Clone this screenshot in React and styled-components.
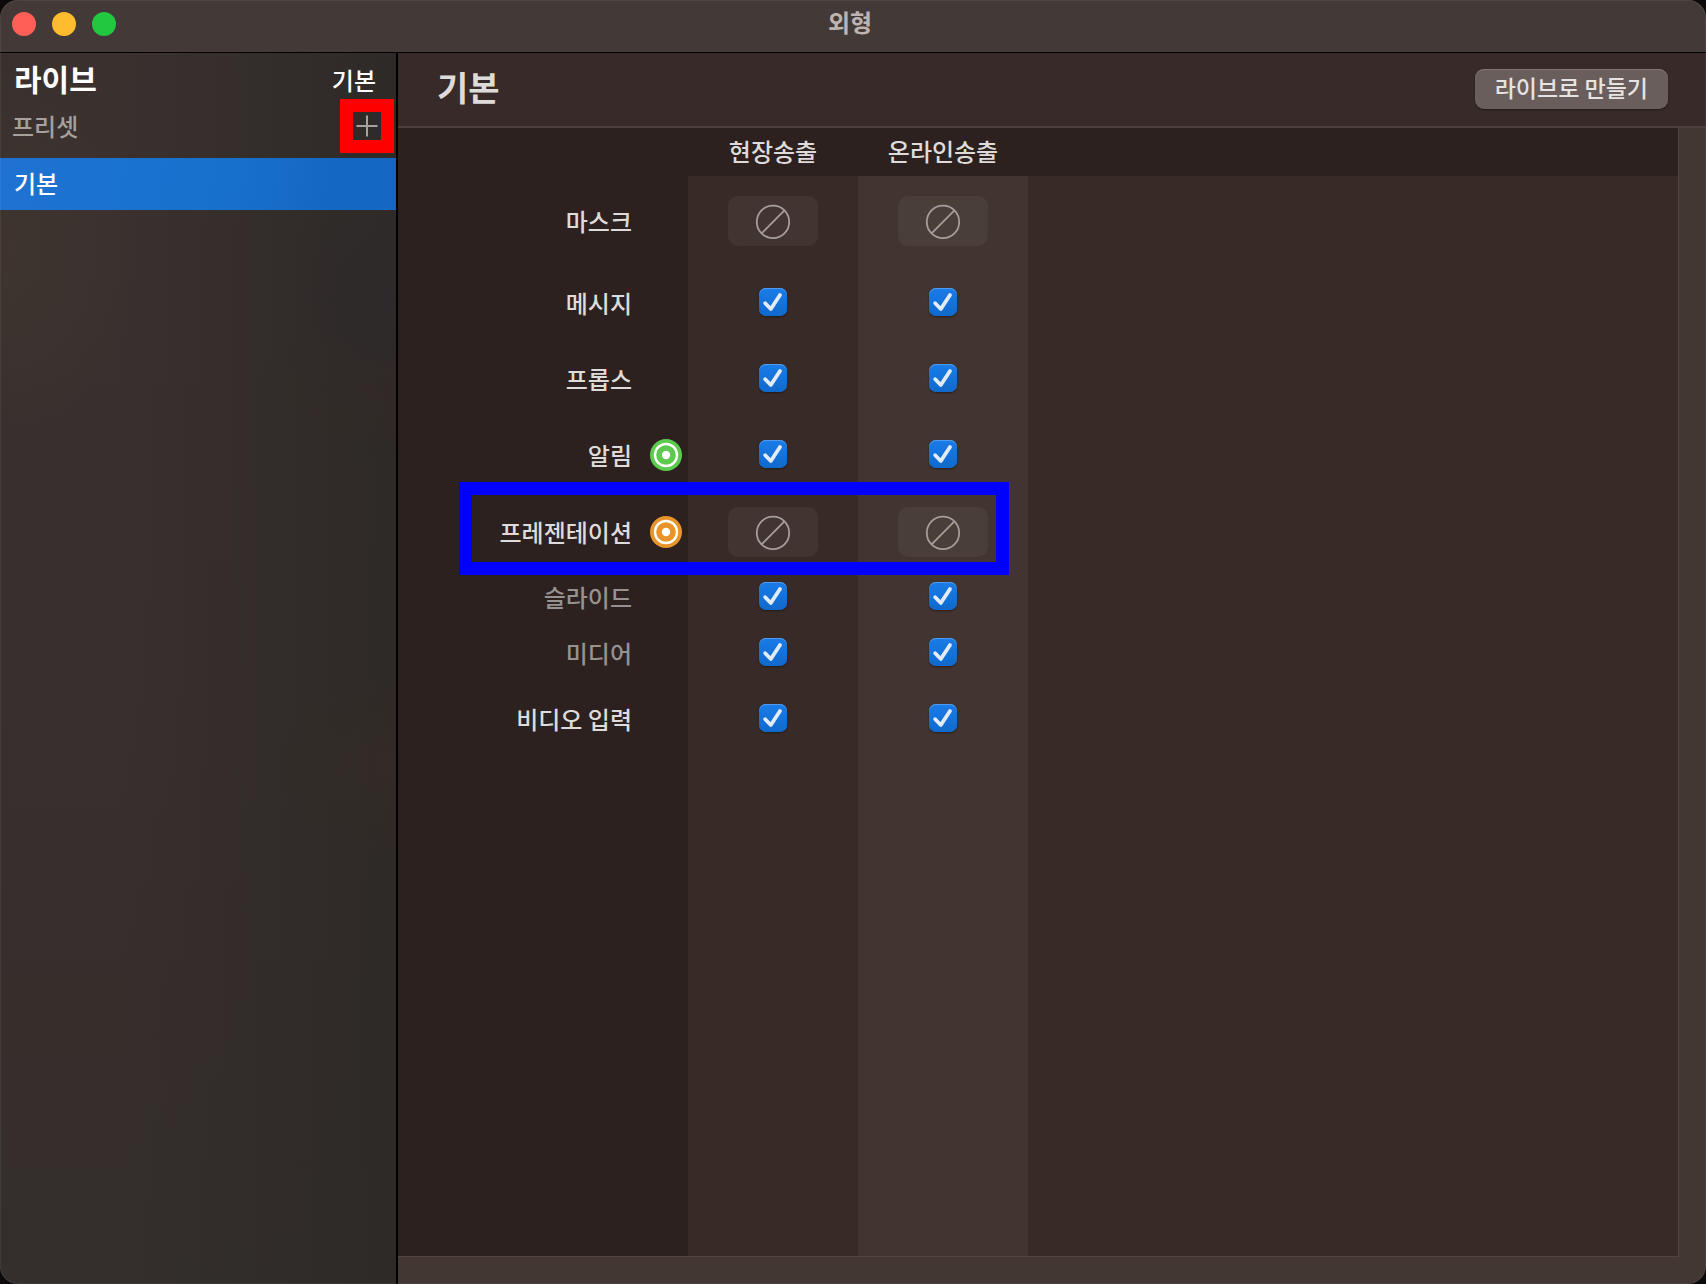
import React from "react";
import styled, { createGlobalStyle } from "styled-components";

const LABEL_WIDTH = 290;
const COLUMN_WIDTH = 170;

const GlobalStyle = createGlobalStyle`
  *, *::before, *::after { box-sizing: border-box; }
  html, body { margin: 0; background: #0c0a0a; }
  body {
    font-family: "Noto Sans CJK KR", "Noto Sans", sans-serif;
    font-size: 24px;
    line-height: 32px;
    font-weight: 500;
    color: #dedbda;
  }
  button, input { font: inherit; color: inherit; margin: 0; padding: 0; border: 0; }
  h1, h2, ul { margin: 0; padding: 0; }
`;

const Window = styled.div`
  position: relative;
  display: flex;
  flex-direction: column;
  min-height: 100vh;
  border-radius: 18px;
  overflow: hidden;
  background: #423733;

  &::after {
    content: "";
    position: absolute;
    inset: 0;
    border-radius: 18px;
    box-shadow: inset 0 0 0 1px rgba(255, 255, 255, 0.06);
    pointer-events: none;
  }
`;

const TitleBar = styled.header`
  display: grid;
  grid-template-columns: 1fr auto 1fr;
  align-items: center;
  height: 53px;
  padding: 0 18px 4px 12px;
  background: #433a37;
  border-bottom: 1px solid #000;
`;

const WindowControls = styled.div`
  display: flex;
  gap: 16px;
`;

const Light = styled.button`
  width: 24px;
  height: 24px;
  border-radius: 50%;
  background: ${(p) => p.$color};
`;

const WindowTitle = styled.h1`
  font-size: 24px;
  line-height: 32px;
  font-weight: 700;
  color: #bdb3b0;
  padding-bottom: 4px;
`;

const Body = styled.div`
  flex: 1;
  display: grid;
  grid-template-columns: 398px 1fr;
`;

const Sidebar = styled.aside`
  border-right: 2px solid #000;
  background:
    radial-gradient(ellipse 130px 140px at 100% 20%, #2e2a2b, transparent),
    radial-gradient(ellipse 140px 70px at 100% 27%, #35292599, transparent),
    radial-gradient(ellipse 140px 100px at 100% 58%, #352b2599, transparent),
    radial-gradient(ellipse 140px 180px at 0% 16%, #3f352e, transparent),
    linear-gradient(90deg, transparent 30%, #2e2a27 100%),
    linear-gradient(180deg, #3a312f 0%, #392f2e 55%, #372e2c 80%, #342f2c 100%);
`;

const LiveRow = styled.div`
  display: flex;
  align-items: center;
  justify-content: space-between;
  height: 54px;
  padding: 0 20px 0 14px;
  color: #fff;
`;

const LiveTitle = styled.h2`
  font-size: 30px;
  line-height: 40px;
  font-weight: 700;
  padding-bottom: 4px;
`;

const PresetHeading = styled.div`
  display: flex;
  align-items: center;
  justify-content: space-between;
  height: 51px;
  padding: 0 18px 14px 12px;
  color: #a8a09d;
`;

const AddButton = styled.button`
  position: relative;
  display: grid;
  place-items: center;
  width: 22px;
  height: 22px;
  background: transparent;
`;

const RedMark = styled.span`
  position: absolute;
  inset: -16px;
  border: 13px solid #fe0000;
  pointer-events: none;
`;

const PresetList = styled.ul`
  list-style: none;
`;

const PresetItem = styled.button`
  display: block;
  width: 100%;
  height: 52px;
  padding: 0 14px 2px;
  text-align: left;
  color: #fff;
  background: linear-gradient(100deg, #1f72d2 0%, #1a72d0 35%, #1870cc 60%, #1467c2 85%, #1467c2 100%);
`;

const Main = styled.main`
  display: flex;
  flex-direction: column;
`;

const MainHeader = styled.div`
  display: flex;
  align-items: center;
  justify-content: space-between;
  height: 75px;
  padding: 0 38px 2px 39px;
  background: #382a28;
  border-bottom: 2px solid #4b3e3c;
`;

const MainTitle = styled.h2`
  font-size: 34px;
  line-height: 44px;
  font-weight: 700;
  padding-bottom: 4px;
`;

const LiveButton = styled.button`
  height: 40px;
  padding: 0 20px 4px;
  border-radius: 9px;
  font-size: 23px;
  line-height: 32px;
  color: #e6e3e2;
  background: #695e5b;
  box-shadow: inset 0 1px 0 #81776f, 0 1px 2px rgba(0, 0, 0, 0.4);
`;

const Panel = styled.section`
  flex: 1;
  margin: 0 27px 27px 0;
  border: solid #54443f;
  border-width: 0 1px 1px 0;
  background:
    linear-gradient(
      90deg,
      #2c211f ${LABEL_WIDTH}px,
      #382a27 ${LABEL_WIDTH}px ${LABEL_WIDTH + COLUMN_WIDTH}px,
      #413431 ${LABEL_WIDTH + COLUMN_WIDTH}px ${LABEL_WIDTH + COLUMN_WIDTH * 2}px,
      #382a27 ${LABEL_WIDTH + COLUMN_WIDTH * 2}px
    );
`;

const Looks = styled.table`
  width: 100%;
  table-layout: fixed;
  border-collapse: collapse;
`;

const HeadRow = styled.tr`
  height: 48px;
  background: #2c211f;
`;

const HeadCell = styled.th`
  width: ${(p) => p.$width}px;
  padding: 0 0 2px;
  font-weight: 500;
  text-align: center;
`;

const Row = styled.tr`
  height: ${(p) => p.$height}px;
`;

const LabelCell = styled.th`
  position: relative;
  padding: ${(p) => (p.$lowered ? "2px" : "0")} 6px 0 0;
  font-weight: 500;
  color: ${(p) => (p.$dim ? "#979190" : "inherit")};
`;

const LabelContent = styled.div`
  display: grid;
  grid-template-columns: 1fr 32px;
  align-items: center;
  gap: 18px;
  text-align: right;
`;

const Cell = styled.td`
  padding: 0;
`;

const Center = styled.div`
  display: grid;
  place-items: center;
`;

const BlueMark = styled.span`
  position: absolute;
  z-index: 1;
  left: 61px;
  top: -8px;
  bottom: -1px;
  width: 550px;
  border: 13px solid #0000fe;
  pointer-events: none;
`;

const NoneButton = styled.button`
  display: grid;
  place-items: center;
  width: 90px;
  height: 50px;
  border-radius: 10px;
  color: #a69e9c;
  background: rgba(130, 120, 110, 0.15);
`;

const CheckWrap = styled.span`
  display: grid;

  > * {
    grid-area: 1 / 1;
  }

  svg {
    pointer-events: none;
    visibility: hidden;
  }

  input:checked + svg {
    visibility: visible;
  }
`;

const CheckInput = styled.input`
  appearance: none;
  width: 28px;
  height: 28px;
  border-radius: 7px;
  background: #5b504d;
  box-shadow: 0 1px 2px rgba(0, 0, 0, 0.4);

  &:checked {
    background: linear-gradient(180deg, #1a7ce8, #0f69cb);
    box-shadow: inset 0 1px 0 #4f9bec, 0 1px 2px rgba(0, 0, 0, 0.4);
  }
`;

function PlusIcon() {
  return (
    <svg width="22" height="22" viewBox="0 0 22 22" fill="none" stroke="#a8a29f" strokeWidth="2" aria-hidden="true">
      <path d="M11 0.5V21.5M0.5 11H21.5" />
    </svg>
  );
}

function NoneIcon() {
  return (
    <svg width="36" height="36" viewBox="0 0 36 36" fill="none" stroke="currentColor" strokeWidth="1.8" aria-hidden="true">
      <circle cx="18" cy="18.9" r="16.2" />
      <path d="M6.6 30.4L29.4 7.4" />
    </svg>
  );
}

function TargetIcon({ color }) {
  return (
    <svg width="32" height="32" viewBox="0 0 32 32" aria-hidden="true">
      <circle cx="16" cy="16" r="16" fill={color} />
      <circle cx="16" cy="16" r="11" fill="none" stroke="#fff" strokeWidth="2.4" />
      <circle cx="16" cy="16" r="4.2" fill="#fff" />
    </svg>
  );
}

function Check({ labelledBy }) {
  return (
    <CheckWrap>
      <CheckInput type="checkbox" defaultChecked aria-labelledby={labelledBy} />
      <svg width="28" height="28" viewBox="0 0 28 28" fill="none" aria-hidden="true">
        <path d="M6.2 15.2L11.8 21L21 7" stroke="#e2ecf9" strokeWidth="3.8" strokeLinecap="round" strokeLinejoin="round" />
      </svg>
    </CheckWrap>
  );
}

const screens = [
  { id: "venue", name: "현장송출" },
  { id: "online", name: "온라인송출" },
];

const layers = [
  { id: "mask", name: "마스크", height: 90, kind: "none" },
  { id: "messages", name: "메시지", height: 72 },
  { id: "props", name: "프롭스", height: 80 },
  { id: "alerts", name: "알림", height: 72, target: "#5cca4c" },
  { id: "presentation", name: "프레젠테이션", height: 84, kind: "none", target: "#e9942b", marked: true },
  { id: "slide", name: "슬라이드", height: 44, dim: true },
  { id: "media", name: "미디어", height: 68, dim: true },
  { id: "video", name: "비디오 입력", height: 64 },
];

const lights = ["#ff5f57", "#febc2e", "#22c840"];

export default function App() {
  return (
    <>
      <GlobalStyle />
      <Window>
        <TitleBar>
          <WindowControls>
            {lights.map((color) => (
              <Light key={color} type="button" $color={color} />
            ))}
          </WindowControls>
          <WindowTitle>외형</WindowTitle>
        </TitleBar>
        <Body>
          <Sidebar>
            <LiveRow>
              <LiveTitle>라이브</LiveTitle>
              <span>기본</span>
            </LiveRow>
            <PresetHeading>
              <span id="presets">프리셋</span>
              <AddButton type="button" aria-labelledby="presets">
                <PlusIcon />
                <RedMark />
              </AddButton>
            </PresetHeading>
            <PresetList>
              <li>
                <PresetItem type="button">기본</PresetItem>
              </li>
            </PresetList>
          </Sidebar>
          <Main>
            <MainHeader>
              <MainTitle>기본</MainTitle>
              <LiveButton type="button">라이브로 만들기</LiveButton>
            </MainHeader>
            <Panel>
              <Looks>
                <thead>
                  <HeadRow>
                    <HeadCell as="td" $width={LABEL_WIDTH} />
                    {screens.map((s) => (
                      <HeadCell key={s.id} id={s.id} scope="col" $width={COLUMN_WIDTH}>
                        {s.name}
                      </HeadCell>
                    ))}
                    <td />
                  </HeadRow>
                </thead>
                <tbody>
                  {layers.map((layer) => (
                    <Row key={layer.id} $height={layer.height}>
                      <LabelCell scope="row" $dim={layer.dim} $lowered={layer.kind !== "none"}>
                        <LabelContent>
                          <span id={layer.id}>{layer.name}</span>
                          {layer.target && <TargetIcon color={layer.target} />}
                        </LabelContent>
                        {layer.marked && <BlueMark />}
                      </LabelCell>
                      {screens.map((s) => (
                        <Cell key={s.id}>
                          <Center>
                            {layer.kind === "none" ? (
                              <NoneButton type="button" aria-labelledby={`${layer.id} ${s.id}`}>
                                <NoneIcon />
                              </NoneButton>
                            ) : (
                              <Check labelledBy={`${layer.id} ${s.id}`} />
                            )}
                          </Center>
                        </Cell>
                      ))}
                    </Row>
                  ))}
                </tbody>
              </Looks>
            </Panel>
          </Main>
        </Body>
      </Window>
    </>
  );
}
